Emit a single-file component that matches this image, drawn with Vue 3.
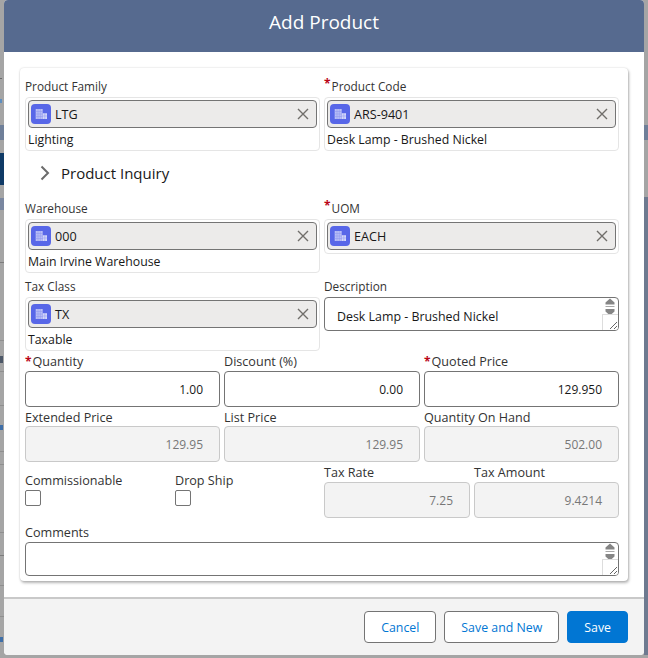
<script setup>
const strips = [
  { l: 0, w: 648, top: 125, h: 15, c: '#6f7f99' },
  { l: 0, w: 4, top: 153, h: 32, c: '#0f3a66' },
  { l: 0, w: 4, top: 198, h: 12, c: '#7a87a0' },
  { l: 644, w: 4, top: 197, h: 458, c: '#6e7a90' },
  { l: 0, w: 2, top: 78, h: 1, c: '#6a6a6a' },
  { l: 0, w: 2, top: 99, h: 4, c: '#5f8fc0' },
  { l: 0, w: 4, top: 262, h: 1, c: '#7d7d7d' },
  { l: 0, w: 4, top: 340, h: 1, c: '#8f8f8f' },
  { l: 0, w: 3, top: 356, h: 7, c: '#4d5868' },
  { l: 0, w: 4, top: 371, h: 1, c: '#8f8f8f' },
  { l: 0, w: 4, top: 405, h: 1, c: '#8f8f8f' },
  { l: 0, w: 3, top: 425, h: 5, c: '#3f6fa8' },
  { l: 0, w: 4, top: 451, h: 1, c: '#8f8f8f' },
  { l: 0, w: 4, top: 464, h: 1, c: '#8f8f8f' },
  { l: 0, w: 4, top: 532, h: 1, c: '#8f8f8f' },
  { l: 0, w: 4, top: 555, h: 1, c: '#7d7d7d' },
  { l: 0, w: 4, top: 585, h: 1, c: '#8f8f8f' },
  { l: 0, w: 4, top: 616, h: 1, c: '#8f8f8f' },
  { l: 0, w: 3, top: 637, h: 5, c: '#3f6fa8' },
];
</script>

<template>
  <div class="page">
    <div class="backdrop">
      <div v-for="s in strips" :key="s.top + '-' + s.l" class="strip" :style="{ left: s.l + 'px', width: s.w + 'px', top: s.top + 'px', height: s.h + 'px', background: s.c }"></div>
    </div>
    <div class="modal">
      <header class="head"><h2>Add Product</h2></header>
      <div class="body">
        <div class="card">
          <div class="two">
            <div class="field">
              <label class="lbl">Product Family</label>
              <div class="lookup">
                <div class="pill">
                  <span class="ico"><svg viewBox="0 0 20 20" width="20" height="20"><path fill="#b9bef6" d="M4.700 5h7v10h-7z"/><path fill="#d5d8fa" d="M11.700 9.200H16V15h-4.300z"/><path stroke="#8b95ef" stroke-width=".5" d="M7 5v10M9.300 5v10M4.700 7.500h7M4.700 10h7M4.700 12.500h7M11.700 12h4.300M13.800 9.200V15"/></svg></span>
                  <span class="val">LTG</span>
                  <svg class="x" viewBox="0 0 12 12" width="12" height="12"><path d="M1 1l10 10M11 1L1 11" stroke="#706e6b" stroke-width="1.4" fill="none"/></svg>
                </div>
                <div class="sub">Lighting</div>
              </div>
            </div>
            <div class="field">
              <label class="lbl"><span class="req up">*</span>Product Code</label>
              <div class="lookup">
                <div class="pill">
                  <span class="ico"><svg viewBox="0 0 20 20" width="20" height="20"><path fill="#b9bef6" d="M4.700 5h7v10h-7z"/><path fill="#d5d8fa" d="M11.700 9.200H16V15h-4.300z"/><path stroke="#8b95ef" stroke-width=".5" d="M7 5v10M9.300 5v10M4.700 7.500h7M4.700 10h7M4.700 12.500h7M11.700 12h4.300M13.800 9.200V15"/></svg></span>
                  <span class="val">ARS-9401</span>
                  <svg class="x" viewBox="0 0 12 12" width="12" height="12"><path d="M1 1l10 10M11 1L1 11" stroke="#706e6b" stroke-width="1.4" fill="none"/></svg>
                </div>
                <div class="sub">Desk Lamp - Brushed Nickel</div>
              </div>
            </div>
          </div>

          <div class="inquiry">
            <svg viewBox="0 0 10 16" width="10" height="16"><path d="M1.5 1.5L8 8l-6.5 6.5" stroke="#6b6b6b" stroke-width="2" fill="none"/></svg>
            <span>Product Inquiry</span>
          </div>

          <div class="two wh">
            <div class="field">
              <label class="lbl">Warehouse</label>
              <div class="lookup">
                <div class="pill">
                  <span class="ico"><svg viewBox="0 0 20 20" width="20" height="20"><path fill="#b9bef6" d="M4.700 5h7v10h-7z"/><path fill="#d5d8fa" d="M11.700 9.200H16V15h-4.300z"/><path stroke="#8b95ef" stroke-width=".5" d="M7 5v10M9.300 5v10M4.700 7.500h7M4.700 10h7M4.700 12.500h7M11.700 12h4.300M13.800 9.200V15"/></svg></span>
                  <span class="val">000</span>
                  <svg class="x" viewBox="0 0 12 12" width="12" height="12"><path d="M1 1l10 10M11 1L1 11" stroke="#706e6b" stroke-width="1.4" fill="none"/></svg>
                </div>
                <div class="sub">Main Irvine Warehouse</div>
              </div>
            </div>
            <div class="field">
              <label class="lbl"><span class="req up">*</span>UOM</label>
              <div class="lookup nosub">
                <div class="pill">
                  <span class="ico"><svg viewBox="0 0 20 20" width="20" height="20"><path fill="#b9bef6" d="M4.700 5h7v10h-7z"/><path fill="#d5d8fa" d="M11.700 9.200H16V15h-4.300z"/><path stroke="#8b95ef" stroke-width=".5" d="M7 5v10M9.300 5v10M4.700 7.500h7M4.700 10h7M4.700 12.500h7M11.700 12h4.300M13.800 9.200V15"/></svg></span>
                  <span class="val">EACH</span>
                  <svg class="x" viewBox="0 0 12 12" width="12" height="12"><path d="M1 1l10 10M11 1L1 11" stroke="#706e6b" stroke-width="1.4" fill="none"/></svg>
                </div>
              </div>
            </div>
          </div>

          <div class="two tax">
            <div class="field">
              <label class="lbl">Tax Class</label>
              <div class="lookup">
                <div class="pill">
                  <span class="ico"><svg viewBox="0 0 20 20" width="20" height="20"><path fill="#b9bef6" d="M4.700 5h7v10h-7z"/><path fill="#d5d8fa" d="M11.700 9.200H16V15h-4.300z"/><path stroke="#8b95ef" stroke-width=".5" d="M7 5v10M9.300 5v10M4.700 7.500h7M4.700 10h7M4.700 12.500h7M11.700 12h4.300M13.800 9.200V15"/></svg></span>
                  <span class="val">TX</span>
                  <svg class="x" viewBox="0 0 12 12" width="12" height="12"><path d="M1 1l10 10M11 1L1 11" stroke="#706e6b" stroke-width="1.4" fill="none"/></svg>
                </div>
                <div class="sub">Taxable</div>
              </div>
            </div>
            <div class="field">
              <label class="lbl">Description</label>
              <div class="area desc">
                <span class="areatext">Desk Lamp - Brushed Nickel</span>
                <div class="scroll">
                  <svg viewBox="0 0 12 20" width="12" height="20"><path d="M6 0.500L10.500 4.500V6.500h-9V4.500z M6 17.500L10.500 13.500V11h-9v2.500z" fill="#858585"/><path d="M1.500 8.500h9" stroke="#a8a8a8" stroke-width="1"/></svg>
                </div>
                <div class="grip"><svg viewBox="0 0 15 15" width="15" height="15"><path d="M14 7l-7 7M14 11l-3 3" stroke="#666" stroke-width="1"/></svg></div>
              </div>
            </div>
          </div>

          <div class="three qty">
            <div class="field"><label class="lbl big"><span class="req">*</span>Quantity</label><div class="inp">1.00</div></div>
            <div class="field"><label class="lbl big">Discount (%)</label><div class="inp">0.00</div></div>
            <div class="field"><label class="lbl big"><span class="req">*</span>Quoted Price</label><div class="inp">129.950</div></div>
          </div>

          <div class="three ext">
            <div class="field"><label class="lbl big">Extended Price</label><div class="inp dis flush">129.95</div></div>
            <div class="field"><label class="lbl big">List Price</label><div class="inp dis flush">129.95</div></div>
            <div class="field"><label class="lbl big">Quantity On Hand</label><div class="inp dis flush">502.00</div></div>
          </div>

          <div class="rate">
            <div class="field chk"><label class="lbl big">Commissionable</label><span class="box"></span></div>
            <div class="field chk"><label class="lbl big">Drop Ship</label><span class="box"></span></div>
            <div class="field pr"><label class="lbl big">Tax Rate</label><div class="inp dis flush">7.25</div></div>
            <div class="field"><label class="lbl big">Tax Amount</label><div class="inp dis flush">9.4214</div></div>
          </div>

          <div class="field comments">
            <label class="lbl big">Comments</label>
            <div class="area">
              <div class="scroll">
                <svg viewBox="0 0 12 20" width="12" height="20"><path d="M6 0.500L10.500 4.500V6.500h-9V4.500z M6 17.500L10.500 13.500V11h-9v2.500z" fill="#858585"/><path d="M1.500 8.500h9" stroke="#a8a8a8" stroke-width="1"/></svg>
              </div>
              <div class="grip"><svg viewBox="0 0 15 15" width="15" height="15"><path d="M14 7l-7 7M14 11l-3 3" stroke="#666" stroke-width="1"/></svg></div>
            </div>
          </div>
        </div>
      </div>
      <footer class="foot">
        <button class="btn">Cancel</button>
        <button class="btn">Save and New</button>
        <button class="btn brand">Save</button>
      </footer>
    </div>
  </div>
</template>

<style>
html, body { margin: 0; background: #a5a5a5; }
</style>

<style scoped>
.page { position: relative; width: 648px; height: 658px; overflow: hidden; background: #a5a5a5; font-family: "Open Sans", "Noto Sans", sans-serif; color: #181818; }
.backdrop { position: absolute; inset: 0; }
.strip { position: absolute; }
.modal { position: absolute; left: 4px; top: 0; width: 640px; height: 655px; display: flex; flex-direction: column; border-radius: 4px; overflow: hidden; background: #fff; }
.head { height: 52px; flex: none; background: #566a8f; display: flex; align-items: center; justify-content: center; padding-bottom: 8px; box-sizing: border-box; }
.head h2 { margin: 0; color: #fff; font-weight: 400; font-size: 19px; }
.body { flex: 1; padding: 16px 16px 0; min-height: 0; }
.card { height: 513px; box-sizing: border-box; padding: 10px 9px 0 5px; border-radius: 4px; box-shadow: 1px 2px 3px 0 rgba(0,0,0,.28), 0 0 2px rgba(0,0,0,.18); display: flex; flex-direction: column; }
.two { display: grid; grid-template-columns: 295px 295px; gap: 4px; }
.three { display: grid; grid-template-columns: 195px 196px 195px; gap: 4px; }
.rate { display: grid; grid-template-columns: 150px 149px 150px 145px; margin-top: 2px; }
.pr { padding-right: 4px; }
.field { display: flex; flex-direction: column; min-width: 0; }
.lbl { font-size: 11.8px; line-height: 16px; height: 18px; color: #333; font-weight: 500; white-space: nowrap; }
.lbl.big { font-size: 12.6px; line-height: 18px; }
.qty .lbl.big, .ext .lbl.big, .comments .lbl.big { line-height: 20px; }
.req { color: #ba0517; margin-right: 1px; font-size: 12px; font-weight: 700; }
.req.up { position: relative; top: -3px; }
.lookup { border: 1px solid #e5e5e5; border-radius: 4px; padding: 2px 2px 0; margin-top: 1px; }
.lookup.nosub { padding-bottom: 3px; align-self: stretch; }
.pill { height: 28px; box-sizing: border-box; border: 1px solid #747474; border-radius: 4px; background: #ecebea; display: flex; align-items: center; padding: 0 7px 0 2px; }
.ico { width: 20px; height: 20px; border-radius: 4px; background: #5867e8; flex: none; display: block; }
.ico svg { display: block; }
.val { font-size: 12.6px; line-height: 20px; padding-top: 2px; margin-left: 4px; flex: 1; }
.x { flex: none; }
.sub { font-size: 12.3px; line-height: 23px; height: 22px; white-space: nowrap; }
.wh { margin-top: 11px; align-items: start; }
.tax { margin-top: 5px; }
.inquiry { display: flex; align-items: center; height: 32px; margin-top: 6px; padding-left: 15px; gap: 11px; font-size: 15px; color: #181818; }
.area { position: relative; border: 1px solid #747474; border-radius: 4px; background: #fff; height: 34px; box-sizing: border-box; overflow: hidden; margin-top: 1px; }
.areatext { position: absolute; left: 12px; top: 10px; font-size: 12.4px; white-space: nowrap; }
.scroll { position: absolute; right: 2px; top: 0; }
.scroll svg { display: block; }
.grip { position: absolute; right: 0; bottom: 0; width: 15px; height: 15px; background: #fff; border-left: 1px solid #ddd; border-top: 1px solid #ddd; }
.grip svg { display: block; }
.inp { height: 36px; box-sizing: border-box; border: 1px solid #747474; border-radius: 4px; background: #fff; font-size: 12px; line-height: 36px; text-align: right; padding-right: 16px; margin-top: 1px; }
.inp.dis { background: #f3f3f3; border-color: #c9c9c9; color: #777; }
.inp.flush { margin-top: 0; }
.qty { margin-top: 1px; }
.ext { margin-top: 1px; }
.box { width: 16px; height: 16px; box-sizing: border-box; border: 1px solid #747474; border-radius: 2px; background: #fff; display: block; }
.chk { padding-top: 8px; }
.comments { margin-top: 5px; }
.foot { flex: none; height: 58px; box-sizing: border-box; border-top: 2px solid #c9c9c9; background: #f3f3f3; display: flex; justify-content: flex-end; align-items: flex-start; gap: 8px; padding: 12px 16px 0; }
.btn { font: inherit; font-size: 12.35px; height: 32px; padding: 0 16px; border-radius: 4px; border: 1px solid #747474; background: #fff; color: #0176d3; }
.btn.brand { background: #0176d3; border-color: #0176d3; color: #fff; }
</style>
